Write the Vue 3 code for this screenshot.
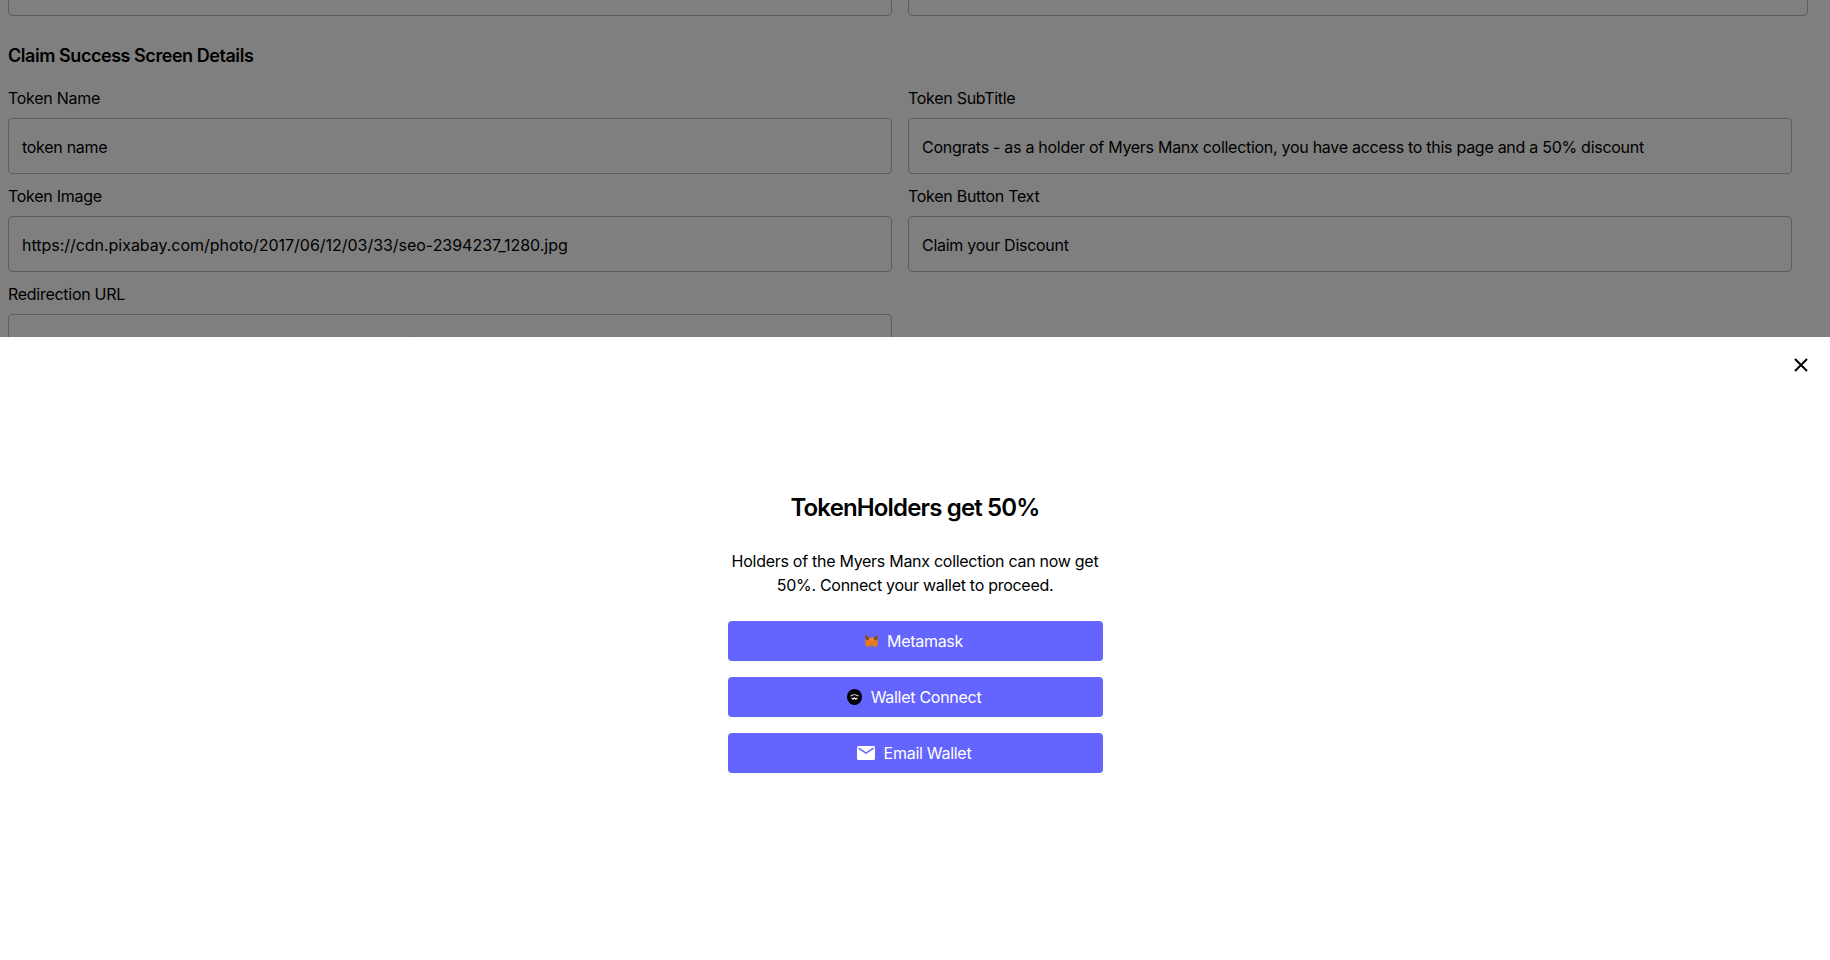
<script setup>
const sections = [
  { label: 'Token Name', value: 'token name' },
  { label: 'Token SubTitle', value: 'Congrats - as a holder of Myers Manx collection, you have access to this page and a 50% discount' },
  { label: 'Token Image', value: 'https://cdn.pixabay.com/photo/2017/06/12/03/33/seo-2394237_1280.jpg', url: true },
  { label: 'Token Button Text', value: 'Claim your Discount' },
  { label: 'Redirection URL', value: 'https://myers-manx-collection-tokenholders.com/discount', url: true }
]
</script>

<template>
  <div class="screen">
    <main class="page">
      <div class="top-row">
        <div class="input"></div>
        <div class="input"></div>
      </div>
      <h2 class="section-title">Claim Success Screen Details</h2>
      <div class="grid">
        <div v-for="s in sections" :key="s.label" class="field">
          <label class="label">{{ s.label }}</label>
          <div class="input" :class="{ url: s.url }">{{ s.value }}</div>
        </div>
      </div>
    </main>

    <div class="backdrop"></div>

    <section class="sheet">
      <button class="close" aria-label="Close">
        <svg width="14" height="14" viewBox="0 0 14 14"><path d="M1 1L13 13M13 1L1 13" stroke="#000" stroke-width="2" fill="none" /></svg>
      </button>
      <div class="content">
        <h1 class="title">TokenHolders get 50%</h1>
        <p class="desc">Holders of the Myers Manx collection can now get 50%. Connect your wallet to proceed.</p>
        <div class="buttons">
          <button class="btn">
            <svg class="fox" width="13" height="13" viewBox="0 0 12 12">
              <path d="M0 0L4 2.5H8L12 0L11.4 4L12 7.5L10.6 11L8 10.4H4L1.4 11L0 7.5L.6 4Z" fill="#e8791f" />
              <path d="M0 0L4 2.5L3 5L.6 4ZM12 0L8 2.5L9 5L11.4 4Z" fill="#7a4a24" />
              <path d="M4 2.5H8L7 6H5Z" fill="#f0862a" />
              <path d="M4.5 9H7.5L7 11.5H5Z" fill="#8a8078" />
            </svg>
            <span>Metamask</span>
          </button>
          <button class="btn">
            <svg class="wc" width="15" height="16" viewBox="0 0 15 16">
              <ellipse cx="7.5" cy="8" rx="7.5" ry="8" fill="#000" />
              <path d="M3.6 7.2C5.8 5.2 9.2 5.2 11.4 7.2M4.6 8.8L6.1 10.2L7.5 8.8L8.9 10.2L10.4 8.8" stroke="#fff" stroke-width="1.1" fill="none" />
            </svg>
            <span>Wallet Connect</span>
          </button>
          <button class="btn">
            <svg class="mail" width="18" height="14" viewBox="0 0 18 14">
              <rect width="18" height="14" rx="1.5" fill="#fff" />
              <path d="M1.5 2.2L9 7.2L16.5 2.2" stroke="#6464ff" stroke-width="1.4" fill="none" />
            </svg>
            <span>Email Wallet</span>
          </button>
        </div>
      </div>
    </section>
  </div>
</template>

<style>
html, body { margin: 0; overflow: hidden; }
</style>

<style scoped>
.screen {
  position: relative;
  width: 1830px;
  height: 960px;
  overflow: hidden;
  font-family: Inter, "Liberation Sans", sans-serif;
  letter-spacing: -0.28px;
  color: #000;
  background: #fff;
}
.page {
  margin-top: -40px;
  padding: 0 8px;
}
.top-row {
  display: grid;
  grid-template-columns: 884px 900px;
  gap: 16px;
}
.section-title {
  margin: 28px 0 0;
  font-size: 18px;
  line-height: 24px;
  font-weight: 600;
  letter-spacing: -0.45px;
}
.grid {
  display: grid;
  grid-template-columns: 884px 884px;
  column-gap: 16px;
  row-gap: 10px;
  margin-top: 18px;
}
.field {
  display: flex;
  flex-direction: column;
  gap: 8px;
}
.label {
  font-size: 16px;
  line-height: 24px;
}
.input {
  box-sizing: border-box;
  height: 56px;
  padding: 1px 13px 0;
  border: 1px solid #bbb;
  border-radius: 4px;
  font-size: 16px;
  line-height: 54px;
  white-space: nowrap;
  overflow: hidden;
}
.url {
  letter-spacing: -0.03px;
}
.backdrop {
  position: absolute;
  inset: 0;
  background: rgba(0, 0, 0, 0.5);
}
.sheet {
  position: absolute;
  left: 0;
  right: 0;
  top: 337px;
  bottom: 0;
  background: #fff;
}
.close {
  position: absolute;
  top: 21px;
  right: 22px;
  padding: 0;
  border: 0;
  background: none;
  line-height: 0;
}
.content {
  width: 375px;
  margin: 0 auto;
  padding-top: 155px;
  text-align: center;
}
.title {
  margin: 0;
  font-size: 24px;
  line-height: 32px;
  font-weight: 600;
  letter-spacing: -0.85px;
}
.desc {
  margin: 25px 0 0;
  font-size: 16px;
  line-height: 24px;
}
.buttons {
  display: flex;
  flex-direction: column;
  gap: 16px;
  margin-top: 24px;
}
.btn {
  display: flex;
  align-items: center;
  justify-content: center;
  gap: 9px;
  height: 40px;
  padding: 0 2px 0 0;
  border: 0;
  border-radius: 4px;
  background: #6464ff;
  color: #fff;
  font: inherit;
  letter-spacing: inherit;
  font-size: 16px;
}
</style>
